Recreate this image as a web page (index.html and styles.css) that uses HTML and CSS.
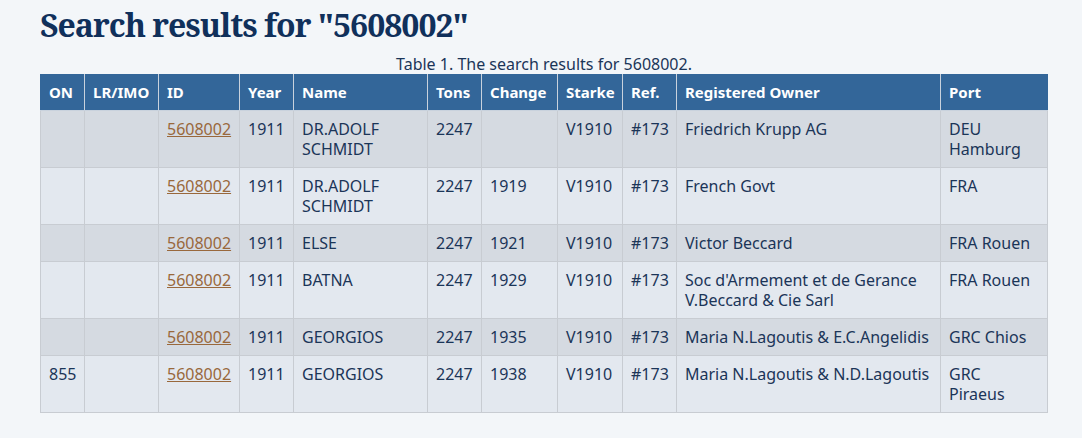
FILE: index.html
```html
<!DOCTYPE html>
<html>
<head>
<meta charset="utf-8">
<link rel="stylesheet" href="styles.css">
</head>
<body>
<main class="page">
  <h1 class="title">Search results for "5608002"</h1>
  <table class="results">
    <caption class="caption">Table 1. The search results for 5608002.</caption>
    <thead>
      <tr>
        <th class="c-on">ON</th>
        <th class="c-lr">LR/IMO</th>
        <th class="c-id">ID</th>
        <th class="c-year">Year</th>
        <th class="c-name">Name</th>
        <th class="c-tons">Tons</th>
        <th class="c-change">Change</th>
        <th class="c-starke">Starke</th>
        <th class="c-ref">Ref.</th>
        <th class="c-owner">Registered Owner</th>
        <th class="c-port">Port</th>
      </tr>
    </thead>
    <tbody>
      <tr>
        <td></td><td></td><td><a href="#">5608002</a></td><td>1911</td><td>DR.ADOLF SCHMIDT</td><td>2247</td><td></td><td>V1910</td><td>#173</td><td>Friedrich Krupp AG</td><td>DEU Hamburg</td>
      </tr>
      <tr>
        <td></td><td></td><td><a href="#">5608002</a></td><td>1911</td><td>DR.ADOLF SCHMIDT</td><td>2247</td><td>1919</td><td>V1910</td><td>#173</td><td>French Govt</td><td>FRA</td>
      </tr>
      <tr>
        <td></td><td></td><td><a href="#">5608002</a></td><td>1911</td><td>ELSE</td><td>2247</td><td>1921</td><td>V1910</td><td>#173</td><td>Victor Beccard</td><td>FRA Rouen</td>
      </tr>
      <tr>
        <td></td><td></td><td><a href="#">5608002</a></td><td>1911</td><td>BATNA</td><td>2247</td><td>1929</td><td>V1910</td><td>#173</td><td>Soc d'Armement et de Gerance V.Beccard &amp; Cie Sarl</td><td>FRA Rouen</td>
      </tr>
      <tr>
        <td></td><td></td><td><a href="#">5608002</a></td><td>1911</td><td>GEORGIOS</td><td>2247</td><td>1935</td><td>V1910</td><td>#173</td><td>Maria N.Lagoutis &amp; E.C.Angelidis</td><td>GRC Chios</td>
      </tr>
      <tr>
        <td>855</td><td></td><td><a href="#">5608002</a></td><td>1911</td><td>GEORGIOS</td><td>2247</td><td>1938</td><td>V1910</td><td>#173</td><td>Maria N.Lagoutis &amp; N.D.Lagoutis</td><td>GRC Piraeus</td>
      </tr>
    </tbody>
  </table>
</main>
</body>
</html>
```

FILE: styles.css
```css
html, body {
  margin: 0;
  padding: 0;
  background: #f3f6f9;
}

.page {
  padding: 4px 35px 0 40px;
  font-family: "Noto Sans", "Open Sans", sans-serif;
  color: #1b3558;
}

.title {
  margin: 0 0 8px 0;
  font-family: "Noto Serif", "DejaVu Serif Condensed", "DejaVu Serif", serif;
  font-weight: bold;
  font-size: 32px;
  letter-spacing: -1px;
  line-height: 42px;
  color: #10305b;
}

.results {
  width: 1007px;
  table-layout: fixed;
  border-collapse: collapse;
  font-size: 16px;
  line-height: 20px;
}

.caption {
  font-size: 16px;
  line-height: 20px;
  color: #1b3558;
}

.results th {
  box-sizing: border-box;
  background: #336699;
  color: #ffffff;
  font-weight: bold;
  font-size: 15px;
  text-align: left;
  padding: 8px 8px;
  border: 1px solid #c9d2dd;
  border-top: none;
  white-space: nowrap;
  overflow: hidden;
}

.results th:first-child { border-left: 1px solid #336699; }
.results th:last-child { border-right: 1px solid #336699; }

.results td {
  padding: 8px 10px 8px 8px;
  border: 1px solid #c8ccd2;
  vertical-align: top;
  text-align: left;
}

.results tbody tr:nth-child(odd) td { background: #d5dae1; }
.results tbody tr:nth-child(even) td { background: #e3e8ef; }

.results a {
  color: #99683c;
  text-decoration: underline;
}

.c-on { width: 44px; }
.c-lr { width: 74px; }
.c-id { width: 81px; }
.c-year { width: 54px; }
.c-name { width: 134px; }
.c-tons { width: 54px; }
.c-change { width: 76px; }
.c-starke { width: 65px; }
.c-ref { width: 54px; }
.c-owner { width: 264px; }
.c-port { width: 107px; }
```
